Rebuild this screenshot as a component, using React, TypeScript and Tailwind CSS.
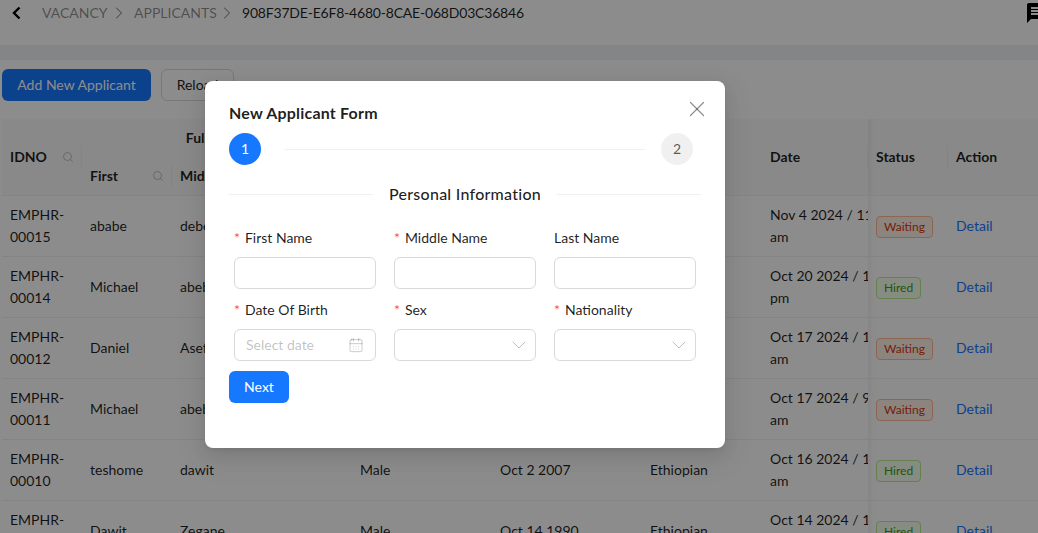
import { CalendarDays, ChevronDown, ChevronRight, Search, X } from "lucide-react";
import { MdMessage } from "react-icons/md";

const rows = [
  { id: "00015", first: "ababe", middle: "debebe", sex: "Male", dob: "Jan 1 2000", nat: "Ethiopian", date: "Nov 4 2024 / 11:20", ampm: "am", status: "Waiting" },
  { id: "00014", first: "Michael", middle: "abebe", sex: "Male", dob: "Oct 9 2000", nat: "Ethiopian", date: "Oct 20 2024 / 1:15", ampm: "pm", status: "Hired" },
  { id: "00012", first: "Daniel", middle: "Asefa", sex: "Male", dob: "Oct 1 1999", nat: "Ethiopian", date: "Oct 17 2024 / 11:02", ampm: "am", status: "Waiting" },
  { id: "00011", first: "Michael", middle: "abebe", sex: "Male", dob: "Oct 9 2000", nat: "Ethiopian", date: "Oct 17 2024 / 9:48", ampm: "am", status: "Waiting" },
  { id: "00010", first: "teshome", middle: "dawit", sex: "Male", dob: "Oct 2 2007", nat: "Ethiopian", date: "Oct 16 2024 / 11:30", ampm: "am", status: "Hired" },
  { id: "00009", first: "Dawit", middle: "Zegane", sex: "Male", dob: "Oct 14 1990", nat: "Ethiopian", date: "Oct 14 2024 / 10:12", ampm: "am", status: "Hired" },
];

function StatusTag({ status }: { status: string }) {
  const waiting = status === "Waiting";
  return (
    <span
      className={`mt-[2px] inline-block h-[22px] rounded-[4px] border px-[7px] text-xs leading-[20px] ${
        waiting ? "border-[#ffbb96] bg-[#fff2e8] text-[#d4380d]" : "border-[#b7eb8f] bg-[#f6ffed] text-[#389e0d]"
      }`}
    >
      {status}
    </span>
  );
}

function HeadDivider({ children }: { children: React.ReactNode }) {
  return (
    <div className="relative flex items-center">
      {children}
      <span className="absolute -right-2 top-1/2 h-[22px] w-px -translate-y-1/2 bg-[#f0f0f0]" />
    </div>
  );
}

function Field({ label, required, children }: { label: string; required?: boolean; children?: React.ReactNode }) {
  return (
    <div className="flex flex-col">
      <label className="flex h-[22px] items-center text-sm text-[#000000e0]">
        {required && <span className="mr-[5px] text-[#ff4d4f]">*</span>}
        {label}
      </label>
      <div className="mt-[8px] h-8 rounded-md border border-[#d9d9d9] bg-white">{children}</div>
    </div>
  );
}

function SelectBox() {
  return (
    <div className="flex h-full items-center justify-end pr-[4px]">
      <ChevronDown className="h-6 w-6 text-[#bfbfbf]" strokeWidth={1} />
    </div>
  );
}

export default function App() {
  return (
    <div className="relative h-[533px] w-[1038px] overflow-hidden bg-white font-['Lato',sans-serif] text-sm text-[#000000e0]">
      <header className="flex h-[45px] items-start">
        <div className="flex h-[26px] items-center pl-[10px]">
          <svg viewBox="0 0 14 14" className="h-[14px] w-[14px]" fill="none" stroke="#000" strokeWidth="2.4">
            <path d="M9.5 1.5 4 7l5.5 5.5" />
          </svg>
          <span className="ml-[18px] w-[62px] text-[#00000073]">VACANCY</span>
          <ChevronRight className="mx-[5px] h-5 w-5 text-[#00000073]" strokeWidth={1.25} />
          <span className="w-[78px] text-[#00000073]">APPLICANTS</span>
          <ChevronRight className="mx-[5px] h-5 w-5 text-[#00000073]" strokeWidth={1.25} />
          <span className="tracking-[-0.2px]">908F37DE-E6F8-4680-8CAE-068D03C36846</span>
        </div>
        <MdMessage className="ml-auto mt-px -mr-[11px] h-6 w-6 text-black" />
      </header>
      <div className="h-[15px] bg-[#f0f2f5]" />

      <main className="px-[2px]">
        <div className="flex h-[59px] items-start gap-[10px] pt-[9px]">
          <button className="h-8 w-[149px] rounded-md bg-[#1677ff] text-white">Add New Applicant</button>
          <button className="h-8 w-[73px] rounded-md border border-[#d9d9d9] bg-white">Reload</button>
        </div>

        <table className="w-[1036px] table-fixed border-collapse">
          <colgroup>
            <col className="w-[80px]" />
            <col className="w-[90px]" />
            <col className="w-[180px]" />
            <col className="w-[140px]" />
            <col className="w-[150px]" />
            <col className="w-[120px]" />
            <col className="w-[106px]" />
            <col className="w-[80px]" />
            <col className="w-[90px]" />
          </colgroup>
          <thead className="bg-[#fafafa] text-left font-bold">
            <tr className="h-[38px]">
              <th rowSpan={2} className="px-2 font-bold">
                <HeadDivider>
                  IDNO
                  <Search className="ml-auto h-3 w-3 text-[#bfbfbf]" />
                </HeadDivider>
              </th>
              <th colSpan={2} className="px-2 text-center font-bold">Full Name</th>
              <th rowSpan={2} className="px-2 font-bold">Sex</th>
              <th rowSpan={2} className="px-2 font-bold">Date Of Birth</th>
              <th rowSpan={2} className="px-2 font-bold">Nationality</th>
              <th rowSpan={2} className="px-2 font-bold">
                <HeadDivider>Date</HeadDivider>
              </th>
              <th rowSpan={2} className="px-2 font-bold shadow-[inset_8px_0_8px_-8px_rgba(0,0,0,0.1)]">
                <HeadDivider>Status</HeadDivider>
              </th>
              <th rowSpan={2} className="px-2 font-bold">Action</th>
            </tr>
            <tr className="h-[38px]">
              <th className="px-2 font-bold">
                <HeadDivider>
                  First
                  <Search className="ml-auto h-3 w-3 text-[#bfbfbf]" />
                </HeadDivider>
              </th>
              <th className="px-2 font-bold">Middle</th>
            </tr>
          </thead>
          <tbody>
            {rows.map((row) => (
              <tr key={row.id} className="h-[61px] border-t border-[#f0f0f0]">
                <td className="px-2 leading-[22px]">
                  EMPHR-
                  <br />
                  {row.id}
                </td>
                <td className="px-2">{row.first}</td>
                <td className="px-2">{row.middle}</td>
                <td className="px-2">{row.sex}</td>
                <td className="px-2">{row.dob}</td>
                <td className="px-2">{row.nat}</td>
                <td className="overflow-hidden whitespace-nowrap pl-2 pr-0 leading-[22px]">
                  {row.date}
                  <br />
                  {row.ampm}
                </td>
                <td className="bg-white px-2 shadow-[inset_8px_0_8px_-8px_rgba(0,0,0,0.1)]">
                  <StatusTag status={row.status} />
                </td>
                <td className="px-2 text-[#1677ff]">Detail</td>
              </tr>
            ))}
          </tbody>
        </table>
      </main>

      {/* modal mask + dialog */}
      <div className="absolute inset-0 flex items-start bg-black/45 pl-[205px]">
        <div className="relative mt-[81px] flex h-[367px] w-[520px] flex-col rounded-lg bg-white px-6 pt-[21px] shadow-[0_6px_16px_0_rgba(0,0,0,0.08),0_3px_6px_-4px_rgba(0,0,0,0.12),0_9px_28px_8px_rgba(0,0,0,0.05)]">
          <X className="absolute right-[15px] top-[15px] h-[26px] w-[26px] text-[#00000073]" strokeWidth={1.1} />
          <h2 className="h-[22px] text-base font-bold leading-[22px] tracking-[0.2px]">New Applicant Form</h2>

          <div className="mt-[9px] flex h-8 items-center pr-[8px]">
            <span className="flex h-8 w-8 items-center justify-center rounded-full bg-[#1677ff] text-white">1</span>
            <span className="ml-[24px] mr-[16px] h-px flex-1 bg-[#f0f0f0]" />
            <span className="flex h-8 w-8 items-center justify-center rounded-full bg-[#0000000f] text-[#000000a6]">2</span>
          </div>

          <div className="mt-[16px] flex h-[26px] items-center gap-4 text-base font-medium tracking-[0.25px]">
            <span className="h-px flex-1 bg-[#f0f0f0]" />
            Personal Information
            <span className="h-px flex-1 bg-[#f0f0f0]" />
          </div>

          <div className="mt-[20px] grid grid-cols-[142px_142px_142px] gap-x-[18px] gap-y-[10px] px-[5px]">
            <Field label="First Name" required />
            <Field label="Middle Name" required />
            <Field label="Last Name" />
            <Field label="Date Of Birth" required>
              <div className="flex h-full items-center justify-between pl-[11px] pr-[11px] text-[#00000040]">
                Select date
                <CalendarDays className="h-[16px] w-[16px] text-[#00000040]" strokeWidth={1.25} />
              </div>
            </Field>
            <Field label="Sex" required>
              <SelectBox />
            </Field>
            <Field label="Nationality" required>
              <SelectBox />
            </Field>
          </div>

          <button className="mt-[10px] h-8 w-[60px] rounded-md bg-[#1677ff] text-white">Next</button>
        </div>
      </div>
    </div>
  );
}
